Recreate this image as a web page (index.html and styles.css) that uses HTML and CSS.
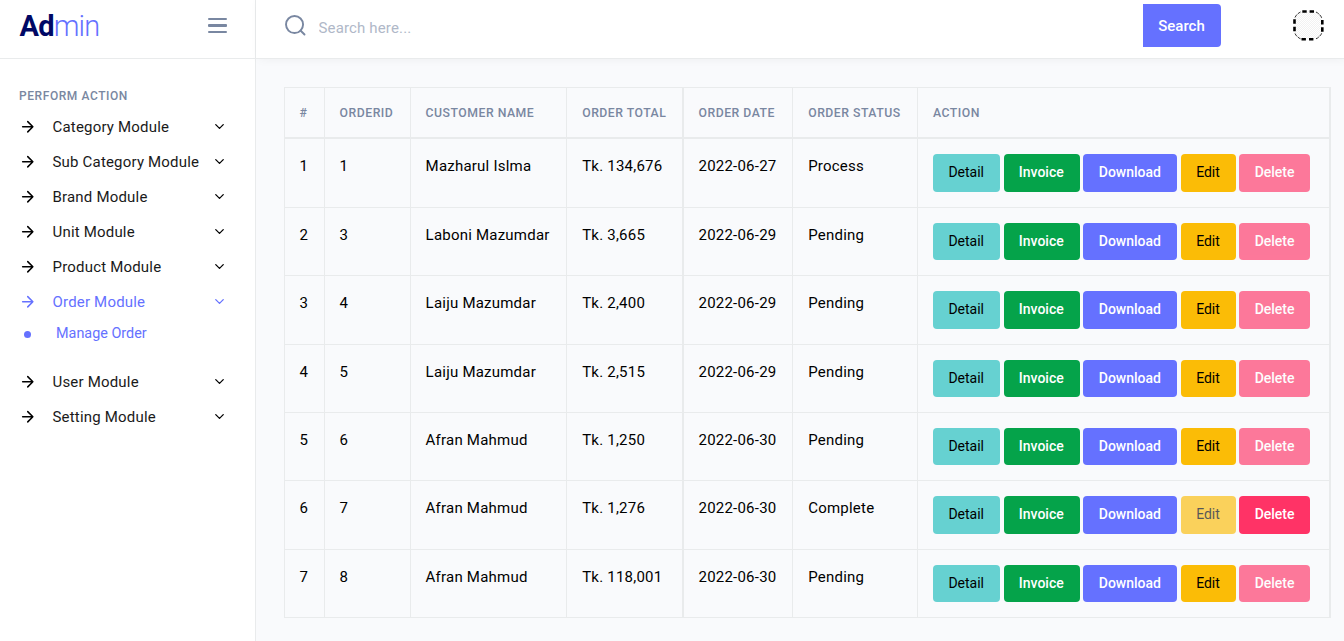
FILE: index.html
```html
<!DOCTYPE html>
<html lang="en">
<head>
<meta charset="utf-8">
<title>Admin - Manage Order</title>
<link rel="stylesheet" href="styles.css">
</head>
<body>
<svg class="defs" width="0" height="0" aria-hidden="true">
  <symbol id="arrow" viewBox="0 0 24 24"><path d="M5 12h14M12 5l7 7-7 7"/></symbol>
  <symbol id="chevron" viewBox="0 0 24 24"><path d="M6 9l6 6 6-6"/></symbol>
</svg>
<div class="app">
  <aside class="sidebar">
    <div class="brand">
      <a class="logo"><b>Ad</b><span>min</span></a>
      <div class="toggler"><i></i><i></i><i></i></div>
    </div>
    <nav class="nav" id="nav">
      <div class="nav-title">PERFORM ACTION</div>
      <a class="item"><svg class="arrow"><use href="#arrow"/></svg><span>Category Module</span><svg class="chevron"><use href="#chevron"/></svg></a>
      <a class="item"><svg class="arrow"><use href="#arrow"/></svg><span>Sub Category Module</span><svg class="chevron"><use href="#chevron"/></svg></a>
      <a class="item"><svg class="arrow"><use href="#arrow"/></svg><span>Brand Module</span><svg class="chevron"><use href="#chevron"/></svg></a>
      <a class="item"><svg class="arrow"><use href="#arrow"/></svg><span>Unit Module</span><svg class="chevron"><use href="#chevron"/></svg></a>
      <a class="item"><svg class="arrow"><use href="#arrow"/></svg><span>Product Module</span><svg class="chevron"><use href="#chevron"/></svg></a>
      <a class="item active"><svg class="arrow"><use href="#arrow"/></svg><span>Order Module</span><svg class="chevron"><use href="#chevron"/></svg></a>
      <a class="subitem"><i></i><span>Manage Order</span></a>
      <a class="item"><svg class="arrow"><use href="#arrow"/></svg><span>User Module</span><svg class="chevron"><use href="#chevron"/></svg></a>
      <a class="item"><svg class="arrow"><use href="#arrow"/></svg><span>Setting Module</span><svg class="chevron"><use href="#chevron"/></svg></a>
    </nav>
  </aside>
  <div class="page">
    <header class="topbar">
      <svg class="search-icon" viewBox="0 0 24 24"><circle cx="11" cy="11" r="8.9"/><path d="M21.4 21.4l-4.2-4.2"/></svg>
      <input class="search" type="text" placeholder="Search here...">
      <button class="search-btn">Search</button>
      <svg class="avatar" viewBox="0 0 32 32">
        <defs><pattern id="check" width="2" height="2" patternUnits="userSpaceOnUse"><rect width="2" height="2" fill="#fff"/><rect width="1" height="1" fill="#f2f2f2"/><rect x="1" y="1" width="1" height="1" fill="#f2f2f2"/></pattern></defs>
        <rect x="2" y="2" width="28" height="28" rx="9" fill="url(#check)"/>
        <path class="dash" d="M10.3 2.5h4.4M17.6 2.5h4.4M9.5 30.3h4.4M17 30.3h4.4M2.5 10.3v4.4M2.5 17.8v4.4M30.3 11v4.4M30.3 18.3v4.4"/>
        <path class="curve" d="M3 8.5Q3.8 6.8 5 5.5M5.8 4.8Q7 3.8 8.5 3M24 3Q25.6 3.8 26.8 4.9M27.5 5.6Q29 7 29.7 8.8M3 24.5Q3.8 26.2 5 27.4M5.8 28Q7 29.2 8.5 29.8M24 29.8Q25.6 29.2 26.8 28M27.5 27.3Q29 26 29.7 24.3"/>
      </svg>
    </header>
    <main class="content">
      <div class="table" id="orders">
        <div class="row head"><div>#</div><div>ORDERID</div><div>CUSTOMER NAME</div><div>ORDER TOTAL</div><div>ORDER DATE</div><div>ORDER STATUS</div><div>ACTION</div></div>
      </div>
    </main>
  </div>
</div>
<script src="orders.js"></script>
</body>
</html>
```

FILE: orders.js
```js
const orders = [
  [1, 'Mazharul Islma', '134,676', '2022-06-27', 'Process'],
  [3, 'Laboni Mazumdar', '3,665', '2022-06-29', 'Pending'],
  [4, 'Laiju Mazumdar', '2,400', '2022-06-29', 'Pending'],
  [5, 'Laiju Mazumdar', '2,515', '2022-06-29', 'Pending'],
  [6, 'Afran Mahmud', '1,250', '2022-06-30', 'Pending'],
  [7, 'Afran Mahmud', '1,276', '2022-06-30', 'Complete'],
  [8, 'Afran Mahmud', '118,001', '2022-06-30', 'Pending'],
];

document.getElementById('orders').insertAdjacentHTML('beforeend', orders.map(
  ([id, name, total, date, status], i) => {
    const done = status === 'Complete';
    return `<div class="row">
      <div>${i + 1}</div><div>${id}</div><div>${name}</div><div>Tk. ${total}</div><div>${date}</div><div>${status}</div>
      <div class="actions">
        <a class="btn detail">Detail</a><a class="btn invoice">Invoice</a><a class="btn download">Download</a>
        <a class="btn edit${done ? ' disabled' : ''}">Edit</a><a class="btn delete${done ? '' : ' disabled'}">Delete</a>
      </div>
    </div>`;
  }).join(''));
```

FILE: styles.css
```css
* { box-sizing: border-box; }
body { margin: 0; font-family: Roboto, "Liberation Sans", sans-serif; color: #000; background: #f9fafb; }
.defs { position: absolute; }
.app { display: flex; height: 641px; overflow: hidden; background: #f9fafc; }

.sidebar { width: 256px; flex: none; background: #fff; border-right: 1px solid #e9ebec; }
.brand { height: 59px; border-bottom: 1px solid #e9ebec; padding: 0 28px 7px 19.5px; display: flex; align-items: center; justify-content: space-between; }
.logo { font-size: 29px; line-height: 34px; letter-spacing: -.85px; color: #6571ff; }
.logo b { font-weight: 700; color: #000865; }
.logo span { font-weight: 300; }
.toggler { display: flex; flex-direction: column; gap: 4.5px; width: 19px; }
.toggler i { height: 2.2px; border-radius: 1px; background: #7987a1; }

.nav { padding: 29px 28.5px 0 19px; }
.nav-title { font-size: 12px; font-weight: 500; letter-spacing: .57px; line-height: 16px; color: #7987a1; margin-bottom: 5.5px; }
.item { height: 35px; display: flex; align-items: center; font-size: 15px; letter-spacing: .19px; color: #1a1a1a; }
.item span { flex: 1; padding-left: 16px; }
.item svg { fill: none; stroke: #000; stroke-width: 2.1; stroke-linecap: round; stroke-linejoin: round; }
.item .arrow { width: 17.5px; height: 17.5px; margin-top: -1px; }
.item .chevron { width: 15px; height: 15px; margin-top: -1px; }
.item.active { color: #6571ff; }
.item.active svg { stroke: #6571ff; }
.subitem { height: 45px; padding: 5px 0 0 5px; display: flex; align-items: flex-start; font-size: 14.4px; line-height: 17px; color: #6571ff; }
.subitem i { width: 7px; height: 7px; margin: 6px 25px 0 0; border-radius: 50%; background: #6571ff; }

.page { flex: 1; display: flex; flex-direction: column; }
.topbar { height: 59px; flex: none; background: #fff; border-bottom: 1px solid #e9ebec; box-shadow: 3px 0 10px rgba(0, 0, 0, .05); padding: 0 20px 0 28px; display: flex; align-items: flex-start; }
.search-icon { width: 23px; height: 23px; margin: 14px -1px 0 0; fill: none; stroke: #7987a1; stroke-width: 2; stroke-linecap: round; }
.search { flex: 1; height: 43px; margin: 6px 0 0; padding: 0 12.5px; border: 0; outline: 0; background: none; font: 400 15px Roboto, sans-serif; letter-spacing: .15px; }
.search::placeholder { color: #b0b8c8; }
.search-btn { width: 78px; height: 43px; margin: 4px 71px 0 0; padding: 0 1px 0 0; border: 0; border-radius: 0 4px 4px 0; background: #6571ff; color: #fff; font: 500 15px Roboto, sans-serif; }
.avatar { width: 32px; height: 32px; margin-top: 9px; fill: none; }
.dash { stroke: #000; stroke-width: 2.6; }
.curve { stroke: #333; stroke-width: 1; }

.content { padding: 28px 13px 0 28px; }
.table { border-top: 1px solid #e9ebec; border-right: 2px solid #e9ebec; font-size: 15px; letter-spacing: .22px; }
.row { display: grid; grid-template-columns: 40px 86px 156px 116px 110px 125px 1fr; height: 68.4px; }
.row > div { border-left: 1px solid #e9ebec; border-bottom: 1px solid #e9ebec; padding: 15px 0 0 14.6px; line-height: 24px; white-space: nowrap; }
.row > div:nth-child(4), .row > div:nth-child(6) { padding-left: 15.2px; }
.row > div:nth-child(5) { border-left-width: 2px; padding-left: 14.5px; }
.row > div:nth-child(7) { padding-left: 15px; }
.row.head { height: 51.4px; font-size: 12.25px; font-weight: 500; letter-spacing: .5px; color: #7987a1; }
.row.head > div { border-bottom-width: 2px; padding-top: 13px; }
.row > .actions { display: flex; gap: 3.6px; }
.btn { height: 37.4px; border-radius: 4px; padding-right: .6px; text-align: center; font-size: 14px; font-weight: 500; letter-spacing: 0; line-height: 36.5px; color: #fff; }
.detail { width: 67px; background: #66d1d1; color: #000; font-weight: 400; }
.invoice { width: 76px; background: #05a34a; }
.download { width: 94px; background: #6571ff; }
.edit { width: 55px; background: #fbbc06; color: #000; font-weight: 400; }
.delete { width: 71px; background: #ff3366; }
.disabled { opacity: .65; }
```
